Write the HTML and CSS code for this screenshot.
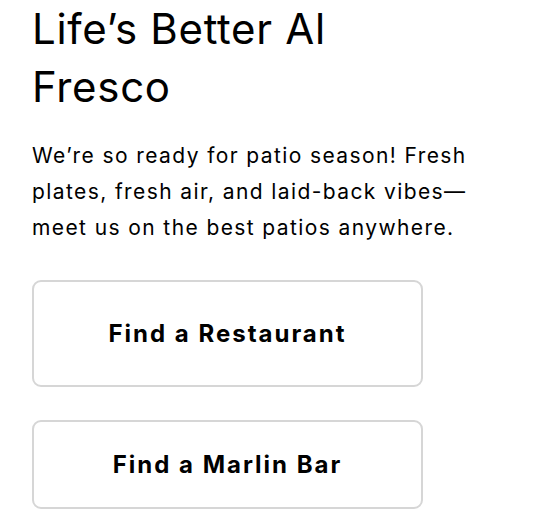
FILE: index.html
```html
<html>
	<head>
		<meta charset="utf-8">
		<meta name="viewport" content="width=device-width">
		<link rel="stylesheet" href="styles.css">
	</head>
	<body>
		<div id="container">
			<h1 class="title">Life’s Better Al Fresco</h1>
			<p class="intro">We’re so ready for patio season! Fresh plates, fresh air, and laid-back vibes—meet us on the best patios anywhere.</p>
			<div class="actions">
				<a class="btn" href="#">Find a Restaurant</a>
				<a class="btn btn-short" href="#">Find a Marlin Bar</a>
			</div>
		</div>
	</body>
</html>
```

FILE: styles.css
```css
html {
	height:100%;
	margin:0;
	padding:0;
}
body {
	margin		: 0;
	padding		: 0;
	background-color: #fff;
	color		: #000;
	font-family	: Inter, "Noto Sans", sans-serif;
	overflow	: hidden;
}
#container {
	width		: 430px;
	padding		: 0 0 0 32px;
}
.title {
	margin		: 0;
	font-size	: 42px;
	font-weight	: 400;
	line-height	: 58px;
	letter-spacing	: 0.7px;
	width		: 330px;
}
.intro {
	margin		: 22px 0 0 0;
	font-size	: 21px;
	line-height	: 36px;
	letter-spacing	: 1.4px;
	width		: 445px;
}
.actions {
	display		: flex;
	flex-direction	: column;
	gap		: 33px;
	margin-top	: 34px;
	width		: 391px;
}
.btn {
	display		: flex;
	align-items	: center;
	justify-content	: center;
	height		: 103px;
	border		: 2px solid #d6d6d6;
	border-radius	: 9px;
	color		: #000;
	text-decoration	: none;
	font-size	: 24px;
	font-weight	: 700;
	letter-spacing	: 2px;
}
.btn-short {
	height		: 85px;
}
```
